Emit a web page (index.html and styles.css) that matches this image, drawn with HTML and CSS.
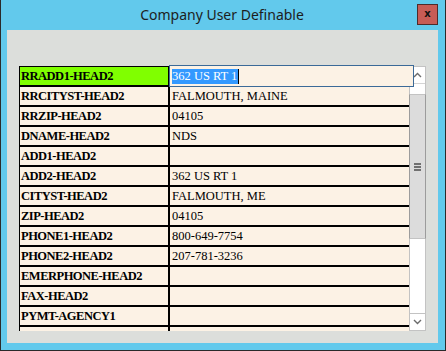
FILE: index.html
```html
<!DOCTYPE html>
<html>
<head>
<meta charset="utf-8">
<link rel="stylesheet" href="styles.css">
</head>
<body>
<div class="window">
  <div class="titlebar">
    <div class="title">Company User Definable</div>
    <div class="close">x</div>
  </div>
  <div class="client">
    <div class="grid">
      <div class="rows">
        <div class="row head"><div class="label">RRADD1-HEAD2</div><div class="value"></div></div>
        <div class="row"><div class="label">RRCITYST-HEAD2</div><div class="value">FALMOUTH, MAINE</div></div>
        <div class="row"><div class="label">RRZIP-HEAD2</div><div class="value">04105</div></div>
        <div class="row"><div class="label">DNAME-HEAD2</div><div class="value">NDS</div></div>
        <div class="row"><div class="label">ADD1-HEAD2</div><div class="value"></div></div>
        <div class="row"><div class="label">ADD2-HEAD2</div><div class="value">362 US RT 1</div></div>
        <div class="row"><div class="label">CITYST-HEAD2</div><div class="value">FALMOUTH, ME</div></div>
        <div class="row"><div class="label">ZIP-HEAD2</div><div class="value">04105</div></div>
        <div class="row"><div class="label">PHONE1-HEAD2</div><div class="value">800-649-7754</div></div>
        <div class="row"><div class="label">PHONE2-HEAD2</div><div class="value">207-781-3236</div></div>
        <div class="row"><div class="label">EMERPHONE-HEAD2</div><div class="value"></div></div>
        <div class="row"><div class="label">FAX-HEAD2</div><div class="value"></div></div>
        <div class="row"><div class="label">PYMT-AGENCY1</div><div class="value"></div></div>
        <div class="row"><div class="label"></div><div class="value"></div></div>
      </div>
      <div class="scrollbar">
        <div class="sb-btn up"><svg width="9" height="6" viewBox="0 0 9 6"><polyline points="1,5 4.5,1.5 8,5" fill="none" stroke="#6b6b6b" stroke-width="1.4"/></svg></div>
        <div class="sb-track">
          <div class="sb-gap"></div>
          <div class="sb-thumb"><div class="grip"></div><div class="grip"></div><div class="grip"></div></div>
          <div class="sb-rest"></div>
        </div>
        <div class="sb-btn down"><svg width="9" height="6" viewBox="0 0 9 6"><polyline points="1,1 4.5,4.5 8,1" fill="none" stroke="#6b6b6b" stroke-width="1.4"/></svg></div>
      </div>
      <div class="editor"><span class="sel">362 US RT 1</span><span class="caret"></span></div>
    </div>
  </div>
</div>
</body>
</html>
```
FILE: styles.css
```css
html, body {
  margin: 0;
  padding: 0;
  background: #ffffff;
}
.window {
  width: 444px;
  height: 350px;
  background: #62c9ec;
  border-left: 1px solid #2a2a2a;
  border-right: 1px solid #2a2a2a;
  border-bottom: 1px solid #2a2a2a;
  display: flex;
  flex-direction: column;
}
.titlebar {
  height: 30px;
  position: relative;
  display: flex;
  justify-content: center;
}
.title {
  font-family: "Noto Sans", sans-serif;
  font-size: 14px;
  color: #1d1d1d;
  line-height: 30px;
  padding-right: 2px;
}
.close {
  position: absolute;
  right: 7px;
  top: 4px;
  width: 19px;
  height: 19px;
  background: #c75c56;
  border: 1px solid #4e2b2b;
  font-family: "DejaVu Sans", sans-serif;
  font-weight: bold;
  font-size: 10px;
  line-height: 18px;
  text-align: center;
  color: #111;
}
.client {
  margin: 0 7px 7px 6px;
  height: 313px;
  background: #dcdedb;
  padding: 36px 0 0 12px;
  box-sizing: border-box;
}
.grid {
  position: relative;
  display: flex;
  height: 265px;
  width: 407px;
}
.rows {
  width: 389px;
  height: 264px;
  overflow: hidden;
  border-top: 1px solid #000;
  border-left: 1px solid #000;
}
.row {
  display: flex;
  height: 18px;
  border-bottom: 2px solid #000;
  background: #fcf2e5;
}
.label {
  width: 147px;
  padding-left: 1px;
  border-right: 2px solid #000;
  font-family: "Liberation Serif", serif;
  font-weight: bold;
  font-size: 12.5px;
  letter-spacing: -0.5px;
  line-height: 19px;
  color: #000;
  white-space: nowrap;
  overflow: hidden;
}
.head .label {
  background: #80ff00;
}
.value {
  flex: 1;
  padding-left: 2px;
  font-family: "Liberation Serif", serif;
  font-size: 12.5px;
  line-height: 19px;
  color: #000;
  white-space: nowrap;
}
.scrollbar {
  width: 17px;
  height: 265px;
  display: flex;
  flex-direction: column;
  box-sizing: border-box;
  border: 1px solid #c3c3c3;
  background: #ffffff;
}
.sb-btn {
  height: 16px;
  display: flex;
  align-items: center;
  justify-content: center;
  background: #ffffff;
}
.sb-btn.up {
  border-bottom: 1px solid #d4d4d4;
}
.sb-btn.down {
  border-top: 1px solid #c3c3c3;
}
.sb-track {
  flex: 1;
  display: flex;
  flex-direction: column;
}
.sb-gap {
  height: 10px;
}
.sb-thumb {
  height: 143px;
  margin: 0 -1px;
  background: #dcdcdc;
  border-left: 1px solid #9c9c9c;
  border-right: 1px solid #9c9c9c;
  border-top: 1px solid #c3c3c3;
  border-bottom: 1px solid #c3c3c3;
  display: flex;
  flex-direction: column;
  justify-content: center;
  align-items: center;
  gap: 1px;
}
.grip {
  width: 7px;
  height: 2px;
  background: #707070;
}
.sb-rest {
  flex: 1;
}
.editor {
  position: absolute;
  left: 150px;
  top: -1px;
  width: 241px;
  height: 20px;
  border: 1px solid #3b6a98;
  background: #fcf2e5;
  display: flex;
  align-items: center;
  padding-left: 2px;
  font-family: "Liberation Serif", serif;
  font-size: 12.5px;
}
.sel {
  background: #3399ff;
  color: #ffffff;
  line-height: 15px;
  padding-right: 1px;
}
.caret {
  width: 1px;
  height: 15px;
  background: #000;
}
```
